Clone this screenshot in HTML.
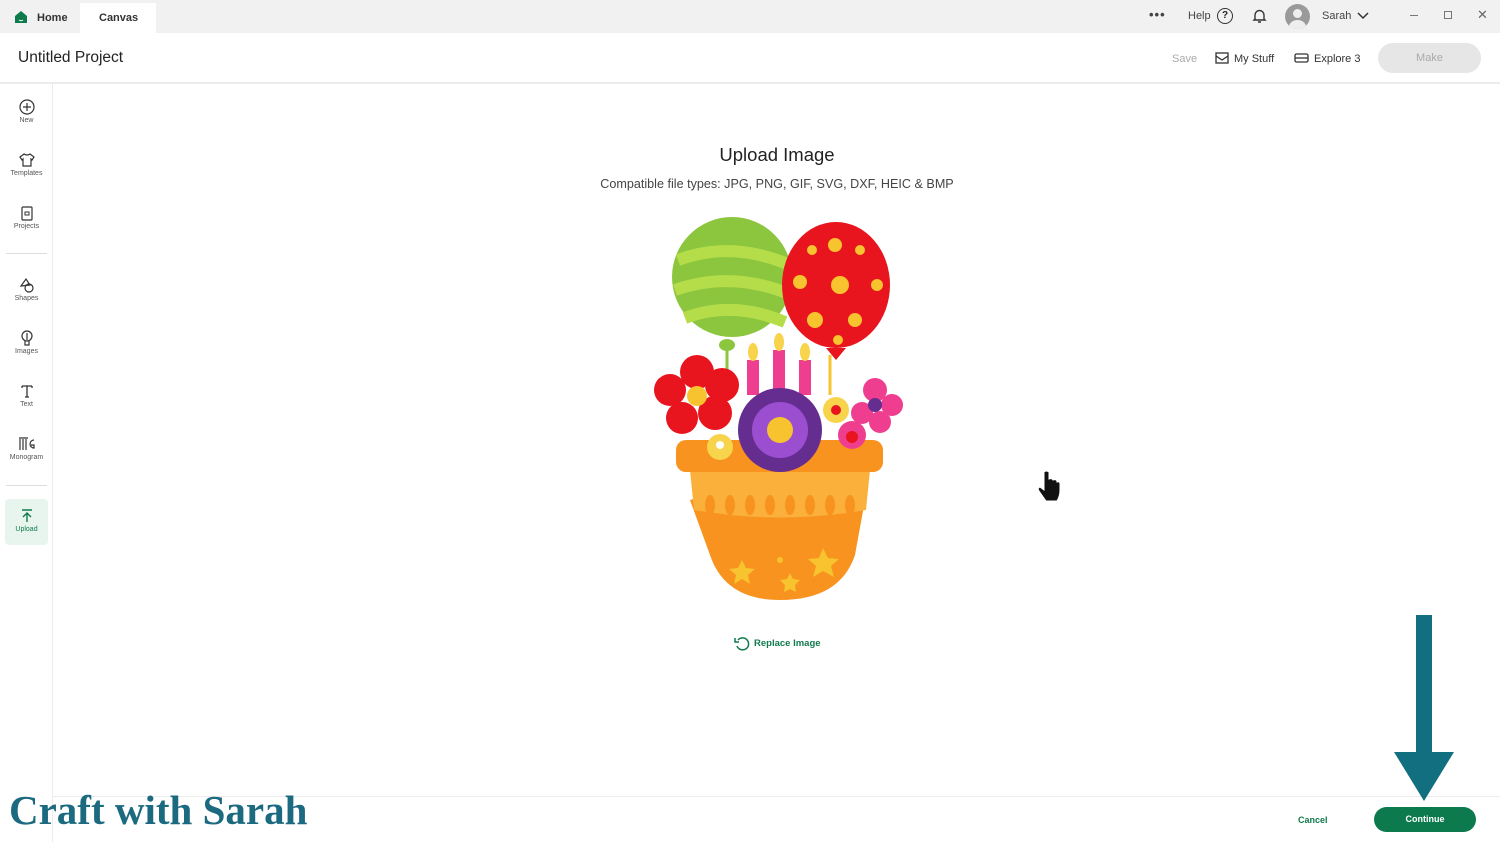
<!DOCTYPE html>
<html><head><meta charset="utf-8"><style>
*{margin:0;padding:0;box-sizing:border-box}
body{width:1500px;height:842px;overflow:hidden;background:#fff;font-family:"Liberation Sans",sans-serif;position:relative;color:#222}
.abs{position:absolute}
.top{left:0;top:0;width:1500px;height:33px;background:#f1f1f1}
.side{left:0;top:84px;width:53px;height:758px;border-right:1px solid #ececec;background:#fff}
.si{position:absolute;left:0;width:53px;text-align:center;font-size:7px;color:#555}
.si svg{display:block;margin:0 auto 2px}
</style></head><body>
<div class="abs top"></div>
<svg class="abs" style="left:14px;top:10px" width="14" height="14" viewBox="0 0 14 14"><path d="M1 6 L7 1 L13 6 V13 H1Z" fill="#0f7a4c"/><path d="M5 10 Q7 11.5 9 10" stroke="#fff" stroke-width="1" fill="none"/></svg>
<div class="abs" style="left:37px;top:12px;font-size:11px;font-weight:bold;color:#333">Home</div>
<div class="abs" style="left:80px;top:3px;width:76px;height:30px;background:#fff"></div>
<div class="abs" style="left:99px;top:12px;font-size:11px;font-weight:bold;color:#333">Canvas</div>
<div class="abs" style="left:1149px;top:7px;font-size:13px;font-weight:bold;color:#444;letter-spacing:1px">•••</div>
<div class="abs" style="left:1188px;top:10px;font-size:11px;color:#444">Help</div>
<div class="abs" style="left:1217px;top:8px;width:16px;height:16px;border:1.5px solid #333;border-radius:50%;font-size:10px;text-align:center;line-height:13px;font-weight:bold">?</div>
<svg class="abs" style="left:1252px;top:8px" width="15" height="16" viewBox="0 0 15 16"><path d="M3 11 V7 A4.5 4.5 0 0 1 12 7 V11 L13 12 H2Z M6 14 H9" stroke="#333" stroke-width="1.4" fill="none"/></svg>
<div class="abs" style="left:1285px;top:4px;width:25px;height:25px;border-radius:50%;background:#9a9a9a;overflow:hidden"><div class="abs" style="left:8px;top:5px;width:9px;height:9px;border-radius:50%;background:#eee"></div><div class="abs" style="left:4px;top:16px;width:17px;height:14px;border-radius:50%;background:#eee"></div></div>
<div class="abs" style="left:1322px;top:10px;font-size:11px;color:#444">Sarah</div>
<svg class="abs" style="left:1357px;top:12px" width="12" height="8"><path d="M1 1 L6 6 L11 1" stroke="#333" stroke-width="1.5" fill="none"/></svg>
<div class="abs" style="left:1410px;top:15px;width:8px;height:1px;background:#777"></div>
<div class="abs" style="left:1444px;top:11px;width:8px;height:8px;border:1px solid #777"></div>
<div class="abs" style="left:1477px;top:7px;font-size:13px;color:#666">✕</div>
<div class="abs" style="left:18px;top:49px;font-size:15.5px;color:#222">Untitled Project</div>
<div class="abs" style="left:1172px;top:53px;font-size:11px;color:#aaa">Save</div>
<svg class="abs" style="left:1215px;top:52px" width="14" height="12"><rect x="1" y="1" width="12" height="10" stroke="#333" fill="none" stroke-width="1.3"/><path d="M1 4 L7 8 L13 4" stroke="#333" fill="none" stroke-width="1.3"/></svg>
<div class="abs" style="left:1234px;top:53px;font-size:11px;color:#333">My Stuff</div>
<svg class="abs" style="left:1294px;top:53px" width="15" height="10"><rect x="1" y="1" width="13" height="8" rx="1.5" stroke="#333" fill="none" stroke-width="1.3"/><path d="M1 5 H14" stroke="#333" stroke-width="1.3"/></svg>
<div class="abs" style="left:1314px;top:53px;font-size:11px;color:#333">Explore 3</div>
<div class="abs" style="left:1378px;top:43px;width:103px;height:30px;border-radius:15px;background:#e6e6e6;font-size:11px;color:#aaa;text-align:center;line-height:30px">Make</div>
<div class="abs" style="left:0;top:82px;width:1500px;height:2px;background:#ececec"></div>
<div class="abs side">
<div class="si" style="top:15px"><svg width="16" height="16"><circle cx="8" cy="8" r="7" stroke="#333" fill="none" stroke-width="1.2"/><path d="M8 4V12M4 8H12" stroke="#333" stroke-width="1.2"/></svg>New</div>
<div class="si" style="top:68px"><svg width="16" height="16"><path d="M5 2 L1 5 L3 8 L4 7 V14 H12 V7 L13 8 L15 5 L11 2 Q8 4 5 2Z" stroke="#333" fill="none" stroke-width="1.2"/></svg>Templates</div>
<div class="si" style="top:121px"><svg width="16" height="16"><rect x="3" y="2" width="10" height="13" rx="1" stroke="#333" fill="none" stroke-width="1.2"/><path d="M6 7H10V10H6Z" stroke="#333" fill="none"/></svg>Projects</div>
<div class="abs" style="left:6px;top:169px;width:41px;height:1px;background:#ddd"></div>
<div class="si" style="top:193px"><svg width="16" height="16"><path d="M2 9 L7 2 L11 8Z" stroke="#333" fill="none" stroke-width="1.2"/><circle cx="10" cy="11" r="4" stroke="#333" fill="none" stroke-width="1.2"/></svg>Shapes</div>
<div class="si" style="top:246px"><svg width="16" height="16"><circle cx="8" cy="6" r="5" stroke="#333" fill="none" stroke-width="1.2"/><path d="M6 11V15H10V11M8 3V10" stroke="#333" fill="none" stroke-width="1.2"/></svg>Images</div>
<div class="si" style="top:299px"><svg width="16" height="16"><path d="M3 3H13M8 3V14M6 14H10M3 3V5M13 3V5" stroke="#333" stroke-width="1.3" fill="none"/></svg>Text</div>
<div class="si" style="top:352px"><svg width="18" height="16"><path d="M1 2H10M2 3V14M5 3V14M8 3V14M16 4A4 4 0 1 0 16 12V9H13" stroke="#333" stroke-width="1.2" fill="none"/></svg>Monogram</div>
<div class="abs" style="left:6px;top:401px;width:41px;height:1px;background:#ddd"></div>
<div class="abs" style="left:5px;top:415px;width:43px;height:46px;border-radius:4px;background:#e8f5ee"></div>
<div class="si" style="top:424px;color:#0f7a4c"><svg width="16" height="16"><path d="M3 2H13M8 14V5M4 9L8 5L12 9" stroke="#0f7a4c" stroke-width="1.4" fill="none"/></svg>Upload</div>
</div>
<div class="abs" style="left:0;top:144px;width:1554px;text-align:center;font-size:18.5px;color:#222">Upload Image</div>
<div class="abs" style="left:0;top:177px;width:1554px;text-align:center;font-size:12.6px;color:#444">Compatible file types: JPG, PNG, GIF, SVG, DXF, HEIC &amp; BMP</div>
<svg class="abs" style="left:640px;top:205px" width="280" height="405" viewBox="640 205 280 405">
<path d="M727 340 L727 380" stroke="#8cc63f" stroke-width="3"/>
<path d="M830 355 L830 395" stroke="#f7c32e" stroke-width="3"/>
<circle cx="732" cy="277" r="60" fill="#8cc63f"/>
<path d="M678 260 Q732 240 790 265 M675 290 Q732 270 792 295 M685 318 Q732 300 785 322" stroke="#b5dd4a" stroke-width="12" fill="none"/>
<ellipse cx="727" cy="345" rx="8" ry="6" fill="#8cc63f"/>
<ellipse cx="836" cy="285" rx="54" ry="63" fill="#e8141e"/>
<path d="M826 348 L846 348 L836 360Z" fill="#e8141e"/>
<g fill="#f7c32e"><circle cx="840" cy="285" r="9"/><circle cx="815" cy="320" r="8"/><circle cx="855" cy="320" r="7"/><circle cx="800" cy="282" r="7"/><circle cx="877" cy="285" r="6"/><circle cx="835" cy="245" r="7"/><circle cx="812" cy="250" r="5"/><circle cx="860" cy="250" r="5"/><circle cx="838" cy="340" r="5"/></g>
<g fill="#ef3e8f"><rect x="747" y="360" width="12" height="35"/><rect x="773" y="350" width="12" height="45"/><rect x="799" y="360" width="12" height="35"/></g>
<g fill="#f7d44c"><ellipse cx="753" cy="352" rx="5" ry="9"/><ellipse cx="779" cy="342" rx="5" ry="9"/><ellipse cx="805" cy="352" rx="5" ry="9"/></g>
<path d="M690 500 Q740 485 780 500 Q830 485 865 500 L855 555 Q840 600 780 600 Q725 600 710 555Z" fill="#f7931e"/>
<path d="M690 470 H870 L866 510 Q780 525 694 510Z" fill="#fbb03b"/>
<rect x="676" y="440" width="207" height="32" rx="10" fill="#f7931e"/>
<g fill="#f7c32e"><path d="M742 560l4 8 9 1-7 6 2 9-8-5-8 5 2-9-7-6 9-1z"/><path d="M823 548l5 10 11 1-8 7 3 11-11-6-10 6 3-11-8-7 11-1z"/><path d="M790 573l3 6 7 1-5 5 1 7-6-3-6 3 1-7-5-5 7-1z"/><circle cx="780" cy="560" r="3"/></g>
<g fill="#f7931e"><ellipse cx="710" cy="505" rx="5" ry="10"/><ellipse cx="730" cy="505" rx="5" ry="10"/><ellipse cx="750" cy="505" rx="5" ry="10"/><ellipse cx="770" cy="505" rx="5" ry="10"/><ellipse cx="790" cy="505" rx="5" ry="10"/><ellipse cx="810" cy="505" rx="5" ry="10"/><ellipse cx="830" cy="505" rx="5" ry="10"/><ellipse cx="850" cy="505" rx="5" ry="10"/></g>
<g fill="#e8141e"><circle cx="697" cy="372" r="17"/><circle cx="722" cy="385" r="17"/><circle cx="715" cy="413" r="17"/><circle cx="682" cy="418" r="16"/><circle cx="670" cy="390" r="16"/></g>
<circle cx="697" cy="396" r="10" fill="#f7c32e"/>
<circle cx="780" cy="430" r="42" fill="#662d91"/>
<circle cx="780" cy="430" r="28" fill="#9b4fd0"/>
<circle cx="780" cy="430" r="13" fill="#f7c32e"/>
<g fill="#ef3e8f"><circle cx="875" cy="390" r="12"/><circle cx="892" cy="405" r="11"/><circle cx="880" cy="422" r="11"/><circle cx="862" cy="413" r="11"/><circle cx="852" cy="435" r="14"/></g>
<circle cx="875" cy="405" r="7" fill="#662d91"/>
<circle cx="852" cy="437" r="6" fill="#e8141e"/>
<circle cx="836" cy="410" r="13" fill="#f7d44c"/><circle cx="836" cy="410" r="5" fill="#e8141e"/>
<circle cx="720" cy="447" r="13" fill="#f7d44c"/><circle cx="720" cy="445" r="4" fill="#fff"/>
</svg>
<svg class="abs" style="left:1036px;top:470px" width="26" height="34"><path d="M8 2 V20 L4 17 Q1 18 3 21 L10 31 H21 Q24 26 24 20 V14 Q24 11 21 12 V11 Q20 9 17 10 Q16 8 13 9 V2 Q10 0 8 2Z" fill="#111" stroke="#fff" stroke-width="1"/></svg>
<svg class="abs" style="left:734px;top:636px" width="16" height="15"><path d="M4 4 A6 6 0 1 1 3 10 M1 2 V6 H5" stroke="#0f7a4c" stroke-width="1.5" fill="none"/></svg>
<div class="abs" style="left:754px;top:638px;font-size:9.5px;font-weight:bold;color:#0f7a4c">Replace Image</div>
<div class="abs" style="left:53px;top:796px;width:1447px;height:1px;background:#ececec"></div>
<div class="abs" style="left:1298px;top:815px;font-size:9px;font-weight:bold;color:#0f7a4c">Cancel</div>
<div class="abs" style="left:1374px;top:807px;width:102px;height:25px;border-radius:13px;background:#0d7a4e;color:#fff;font-size:9px;font-weight:bold;text-align:center;line-height:25px">Continue</div>
<div class="abs" style="left:1416px;top:615px;width:16px;height:140px;background:#126f7f"></div>
<svg class="abs" style="left:1394px;top:752px" width="60" height="50"><path d="M0 0 H60 L30 49Z" fill="#126f7f"/></svg>
<div class="abs" style="left:9px;top:786px;font-family:'Liberation Serif',serif;font-weight:bold;font-size:41px;color:#1b6a80;letter-spacing:0px">Craft with Sarah</div>
</body></html>
